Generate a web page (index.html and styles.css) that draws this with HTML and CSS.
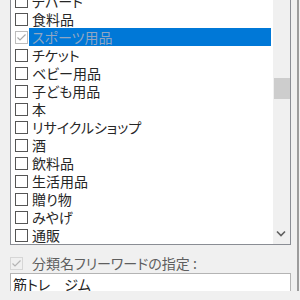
FILE: index.html
```html
<!DOCTYPE html>
<html lang="ja">
<head>
    <meta charset="UTF-8">
    <title>分類名の指定</title>
    <link rel="stylesheet" href="styles.css">
</head>
<body>
    <div class="pane">
        <!-- 分類リスト -->
        <div class="list">
            <div class="items">
                <div class="item"><span class="box"></span><span class="label">デパート</span></div>
                <div class="item"><span class="box"></span><span class="label">食料品</span></div>
                <div class="item selected">
                    <span class="box checked">
                        <svg width="11" height="11" viewBox="0 0 11 11"><path d="M1.5 5.5 L4 8 L9.5 2.5" fill="none" stroke="#a9a9a9" stroke-width="1.2"/></svg>
                    </span>
                    <span class="label">スポーツ用品</span>
                </div>
                <div class="item"><span class="box"></span><span class="label">チケット</span></div>
                <div class="item"><span class="box"></span><span class="label">ベビー用品</span></div>
                <div class="item"><span class="box"></span><span class="label">子ども用品</span></div>
                <div class="item"><span class="box"></span><span class="label">本</span></div>
                <div class="item"><span class="box"></span><span class="label">リサイクルショップ</span></div>
                <div class="item"><span class="box"></span><span class="label">酒</span></div>
                <div class="item"><span class="box"></span><span class="label">飲料品</span></div>
                <div class="item"><span class="box"></span><span class="label">生活用品</span></div>
                <div class="item"><span class="box"></span><span class="label">贈り物</span></div>
                <div class="item"><span class="box"></span><span class="label">みやげ</span></div>
                <div class="item"><span class="box"></span><span class="label">通販</span></div>
            </div>
            <div class="scrollbar">
                <div class="arrow"></div>
                <div class="track"><div class="thumb"></div></div>
                <div class="arrow">
                    <svg width="17" height="17" viewBox="0 0 17 17"><path d="M4 4.5 L8 8.5 L12 4.5" fill="none" stroke="#606060" stroke-width="1.6"/></svg>
                </div>
            </div>
        </div>

        <!-- フリーワード -->
        <div class="option">
            <span class="box disabled">
                <svg width="11" height="11" viewBox="0 0 11 11"><path d="M1.5 5.5 L4 8 L9.5 2.5" fill="none" stroke="#b4b4b4" stroke-width="1.2"/></svg>
            </span>
            <span class="option-text">分類名フリーワードの指定 :</span>
        </div>
        <div class="input">筋トレ　ジム</div>
    </div>
</body>
</html>
```

FILE: styles.css
```css
body {
    margin: 0;
    background-color: #f0f0f0;
    font-family: "Noto Sans CJK JP", "Noto Sans", sans-serif;
    font-feature-settings: "palt";
    color: #262626;
    overflow: hidden;
}

.pane {
    width: 281px;
    height: 300px;
    padding-left: 10px;
    padding-right: 6px;
    border-right: 2px solid #9c9c9c;
}

.list {
    display: flex;
    margin-top: -9px;
    height: 252px;
    border: 1px solid #8a8d94;
    background-color: #fff;
}

.items {
    flex: 1;
}

.item {
    display: flex;
    align-items: center;
    height: 18px;
    padding-left: 4px;
    font-size: 14px;
}

.box {
    width: 11px;
    height: 11px;
    border: 1px solid #555;
    background-color: #fff;
    flex-shrink: 0;
}

.box svg {
    display: block;
}

.box.checked {
    border-color: #bcbcbc;
}

.label {
    flex: 1;
    height: 18px;
    line-height: 18px;
    margin-left: 1px;
    margin-right: 2px;
    padding-left: 3px;
    white-space: nowrap;
}

.selected .label {
    background-color: #0078d7;
    color: #8fa6c2;
}

.scrollbar {
    display: flex;
    flex-direction: column;
    width: 17px;
    background-color: #f0f0f0;
}

.arrow {
    height: 17px;
}

.arrow svg {
    display: block;
}

.track {
    flex: 1;
}

.thumb {
    height: 21px;
    margin-top: 69px;
    margin-left: 1px;
    width: 16px;
    background-color: #cdcdcd;
}

.option {
    display: flex;
    align-items: center;
    height: 18px;
    margin-top: 9px;
}

.box.disabled {
    background-color: #f0f0f0;
    border-color: #d6d6d6;
}

.option-text {
    margin-left: 9px;
    font-size: 14px;
    color: #5e5e5e;
}

.input {
    height: 21px;
    margin-top: 1px;
    padding-left: 2px;
    border: 1px solid #b4b4b4;
    background-color: #fff;
    font-size: 14px;
    line-height: 21px;
    color: #222;
    white-space: nowrap;
}
```
